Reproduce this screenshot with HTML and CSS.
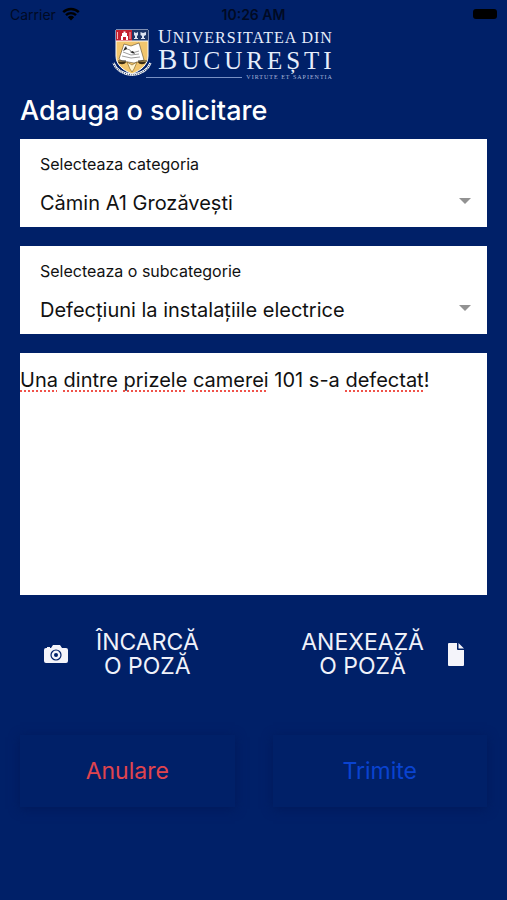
FILE: index.html
```html
<!DOCTYPE html>
<html lang="ro">
<head>
<meta charset="utf-8">
<meta name="viewport" content="width=device-width, initial-scale=1">
<title>Adauga o solicitare</title>
<link rel="stylesheet" href="styles.css">
</head>
<body>
<div class="status">
  <div class="carrier">
    <span>Carrier</span>
    <svg class="wifi" viewBox="0 0 18 14" aria-hidden="true">
      <path d="M1.2 5.2a11 11 0 0 1 15.6 0M4 8.2a7 7 0 0 1 10 0" fill="none" stroke="#000" stroke-width="2.4"/>
      <path d="M5.8 10.2a4.5 4.5 0 0 1 6.4 0L9 13.6z"/>
    </svg>
  </div>
  <span class="time">10:26 AM</span>
  <span class="battery"></span>
</div>

<header class="brand">
  <svg class="crest" viewBox="0 0 40 50" aria-hidden="true">
    <path d="M4 2h32v26c0 9-7 14-16 18C11 42 4 37 4 28z" fill="#f2c66d" stroke="#fff" stroke-width="1"/>
    <path d="M4 2h16v11H4z" fill="#c4202f"/>
    <path d="M20 2h16v11H20z" fill="#1d3566"/>
    <path d="M4 13h32" stroke="#fff" stroke-width="1"/>
    <path d="M9 12V8h1V5h1.500V3.500h2V5H15v3h1v4h-2V9h-3v3z" fill="#fff"/>
    <path d="M5.500 4v7M18 4v7" stroke="#f4b5b8" stroke-width="1"/>
    <path d="M22 4l2 1 2-1v3l-1 1v2h1v1h-4v-1h1V8l-1-1zM28.500 4l2.500 1 3-1v3l-2 1v2h1v1h-4v-1h1V8l-1.500-1z" fill="#dce3f0"/>
    <path d="M12 16l7 2 8-3 5 17-10 3-12-2-3-2z" fill="#fff" stroke="#5c4a2a" stroke-width=".6"/>
    <path d="M12 20l6 2 2 3 7-2M11 24l8 3 8-1M10 28l9 2 9-1" fill="none" stroke="#727272" stroke-width=".7"/>
    <path d="M14 18l-3 5 4-2zM18 24l5 2-2-3z" fill="#222"/>
    <path d="M6 33h8M26 33h9" stroke="#2a2418" stroke-width="1"/>
    <path d="M6 34h8c-1 3-7 3-8 0M26 34h8c-1 3-7 3-8 0" fill="#3b2c12"/>
    <path d="M15 34l5 3 5-3-3 7-2 3-2-3z" fill="#fff4cf" stroke="#7b5b1d" stroke-width=".6"/>
    <path d="M1.500 35c3 8 11 11 18.500 12 7.500-1 15.500-4 18.500-12" fill="none" stroke="#fff" stroke-width="2.200"/>
    <path d="M1.500 35c3 8 11 11 18.500 12 7.500-1 15.500-4 18.500-12" fill="none" stroke="#35486f" stroke-width="1.200" stroke-dasharray="1 1"/>
  </svg>
  <div class="wordmark">
    <span class="line-top"><b>U</b>NIVERSITATEA DIN</span>
    <span class="line-main"><b>B</b>UCUREȘTI</span>
    <span class="motto">VIRTUTE ET SAPIENTIA</span>
  </div>
</header>

<main class="page">
  <h1>Adauga o solicitare</h1>
  <form class="form">
    <div class="field">
      <label for="category">Selecteaza categoria</label>
      <div class="picker">
        <select id="category"><option>Cămin A1 Grozăvești</option></select>
        <svg class="caret" viewBox="0 0 12 6" aria-hidden="true"><path d="M0 0h12L6 6z"/></svg>
      </div>
    </div>
    <div class="field">
      <label for="subcategory">Selecteaza o subcategorie</label>
      <div class="picker">
        <select id="subcategory"><option>Defecțiuni la instalațiile electrice</option></select>
        <svg class="caret" viewBox="0 0 12 6" aria-hidden="true"><path d="M0 0h12L6 6z"/></svg>
      </div>
    </div>
    <div class="message">
      <div class="spelling" aria-hidden="true"><u>Una</u> <u>dintre</u> <u>prizele</u> <u>camerei</u> 101 s-a <u>defectat</u>!</div>
      <textarea aria-label="Descriere" spellcheck="false">Una dintre prizele camerei 101 s-a defectat!</textarea>
    </div>
    <div class="photos">
      <button type="button" class="photo">
        <svg class="camera" viewBox="0 0 24 18" aria-hidden="true">
          <path fill="#f4f4fa" d="M2 3h1V2h3v1h1l2-3h7l2 3h4a2 2 0 0 1 2 2v11a2 2 0 0 1-2 2H2a2 2 0 0 1-2-2V5a2 2 0 0 1 2-2z"/>
          <circle cx="12" cy="10" r="5" fill="none" stroke="#002068" stroke-width="1.200"/>
          <circle cx="12" cy="10" r="2" fill="#002068"/>
        </svg>
        <span>ÎNCARCĂ<br>O POZĂ</span>
      </button>
      <button type="button" class="photo attach">
        <span>ANEXEAZĂ<br>O POZĂ</span>
        <svg class="file" viewBox="0 0 16 23" aria-hidden="true">
          <path fill="#f4f4fa" d="M1 0h8v6a1 1 0 0 0 1 1h6v15a1 1 0 0 1-1 1H1a1 1 0 0 1-1-1V1a1 1 0 0 1 1-1zM10.500 0L16 5.500h-5.500z"/>
        </svg>
      </button>
    </div>
    <div class="actions">
      <button type="button" class="action cancel">Anulare</button>
      <button type="submit" class="action send">Trimite</button>
    </div>
  </form>
</main>
</body>
</html>
```
FILE: styles.css
```css
* { box-sizing: border-box; }

body {
  margin: 0;
  min-height: 100vh;
  background: #002068;
  color: #fff;
  font-family: Inter, "Liberation Sans", sans-serif;
}

button, select, textarea { font: inherit; color: inherit; }

.status {
  display: grid;
  grid-template-columns: 1fr auto 1fr;
  align-items: center;
  height: 28px;
  padding: 0 10px;
  color: #000a24;
  font-size: 14px;
}
.carrier { display: flex; align-items: center; gap: 6px; }
.wifi { width: 18px; height: 14px; }
.time { font-weight: 600; }
.battery {
  justify-self: end;
  width: 24px;
  height: 10px;
  border-radius: 3px;
  background: #000;
}

.brand {
  display: flex;
  justify-content: center;
  gap: 6px;
  height: 52px;
  padding-right: 62px;
  color: #e6edfb;
  font-family: "Liberation Serif", serif;
}
.crest { flex: none; width: 40px; height: 50px; }
.wordmark { display: flex; flex-direction: column; white-space: nowrap; }
.wordmark b { font-weight: 400; }
.line-top { font-size: 16px; line-height: 18px; letter-spacing: 1px; }
.line-top b { font-size: 19px; }
.line-main { font-size: 25px; line-height: 24px; letter-spacing: 4px; margin-right: -4px; }
.line-main b { font-size: 29px; }
.motto {
  display: flex;
  align-items: center;
  gap: 4px;
  font-size: 6px;
  line-height: 8px;
  letter-spacing: 1px;
  color: #a9b8dc;
}
.motto::before { content: ""; flex: 1; margin-left: -12px; border-top: 1px solid #7890c4; }

.page { padding: 13px 20px 24px; }

h1 { margin: 0 0 10px; font-size: 27px; line-height: 36px; font-weight: 500; }

.form { display: flex; flex-direction: column; gap: 19px; }

.field {
  height: 88px;
  padding: 15px 16px 8px 20px;
  background: #fff;
  color: #111;
}
.field label { display: block; font-size: 16px; line-height: 20px; }
.picker { display: flex; align-items: flex-start; margin-top: 11px; }
.picker select {
  flex: 1;
  min-width: 0;
  height: 36px;
  padding: 0;
  border: 0;
  background: transparent;
  appearance: none;
  font-size: 20px;
}
.caret { width: 12px; height: 6px; margin-top: 13px; fill: #929292; }

.message { display: grid; height: 242px; background: #fff; color: #111; }
.message > * {
  grid-area: 1 / 1;
  margin: 0;
  padding: 13px 0;
  border: 0;
  font-size: 20px;
  line-height: 28px;
}
.message textarea { width: 100%; resize: none; outline: 0; background: transparent; }
.spelling { color: transparent; }
.spelling u { text-decoration: underline dotted #f0524a 2px; text-underline-offset: 3px; text-decoration-skip-ink: none; }

.photos { display: flex; justify-content: space-between; padding: 16px 23px 0 24px; }
.photo {
  display: flex;
  align-items: center;
  gap: 28px;
  padding: 0;
  border: 0;
  background: none;
  color: #f0f2fa;
  font-size: 23px;
  line-height: 24px;
  text-align: center;
}
.attach { gap: 24px; }
.camera { width: 24px; height: 18px; }
.file { width: 16px; height: 23px; }

.actions { display: grid; grid-template-columns: 1fr 1fr; gap: 38px; padding-top: 38px; }
.action {
  height: 72px;
  border: 0;
  background: #002068;
  box-shadow: 0 2px 10px #00195a;
  font-size: 23px;
}
.cancel { color: #e0444e; }
.send { color: #0a43d0; }
```
